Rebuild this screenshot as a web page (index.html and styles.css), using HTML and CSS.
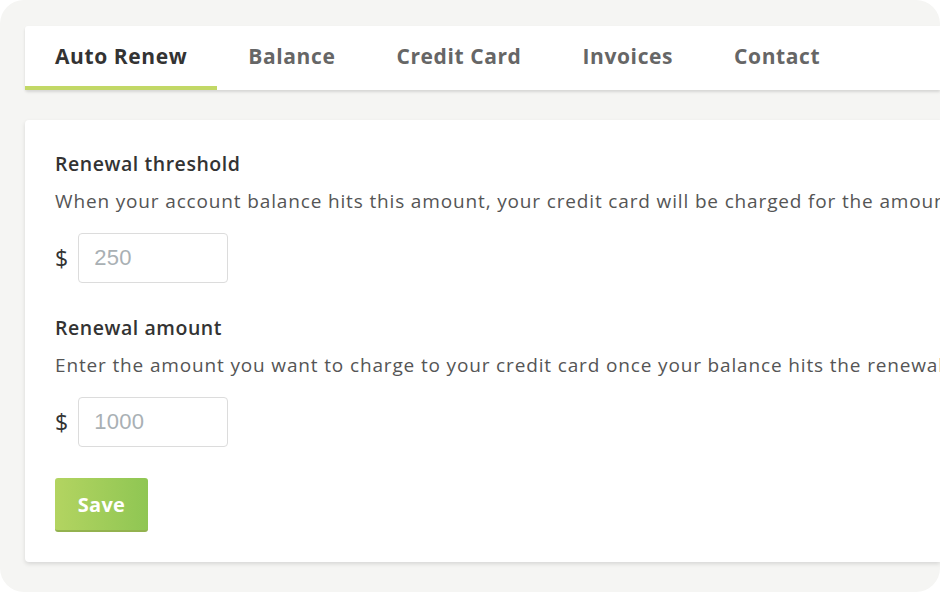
FILE: index.html
```html
<!DOCTYPE html>
<html lang="en">
<head>
    <meta charset="UTF-8">
    <meta name="viewport" content="width=device-width, initial-scale=1.0">
    <title>Auto Renew</title>
    <link rel="stylesheet" href="styles.css">
</head>
<body>
    <div class="frame">
        <!-- Tabs -->
        <nav class="tabs">
            <a class="tab active" href="#">Auto Renew</a>
            <a class="tab" href="#">Balance</a>
            <a class="tab" href="#">Credit Card</a>
            <a class="tab" href="#">Invoices</a>
            <a class="tab" href="#">Contact</a>
        </nav>

        <!-- Auto renew settings -->
        <section class="card">
            <div class="field">
                <h3>Renewal threshold</h3>
                <p>When your account balance hits this amount, your credit card will be charged for the amount set below.</p>
                <div class="input-row">
                    <span class="currency">$</span>
                    <input type="text" placeholder="250">
                </div>
            </div>
            <div class="field">
                <h3>Renewal amount</h3>
                <p>Enter the amount you want to charge to your credit card once your balance hits the renewal threshold.</p>
                <div class="input-row">
                    <span class="currency">$</span>
                    <input type="text" placeholder="1000">
                </div>
            </div>
            <button class="save">Save</button>
        </section>
    </div>
</body>
</html>
```

FILE: styles.css
```css
body {
    margin: 0;
    padding: 0;
    background-color: #fff;
    font-family: "Open Sans", Arial, sans-serif;
}

.frame {
    width: 940px;
    height: 592px;
    box-sizing: border-box;
    padding: 26px 0 0 25px;
    background-color: #f5f5f3;
    border-radius: 24px;
    overflow: hidden;
}

.tabs {
    display: flex;
    height: 64px;
    background-color: #fff;
    border-radius: 3px 0 0 3px;
    box-shadow: 0 2px 3px rgba(0, 0, 0, 0.13);
}

.tab {
    display: flex;
    align-items: center;
    padding: 0 30px;
    box-sizing: border-box;
    border-bottom: 4px solid transparent;
    font-size: 21px;
    font-weight: 700;
    color: #666;
    text-decoration: none;
    letter-spacing: 0.6px;
}

.tab + .tab {
    margin-left: 1px;
}

.tab.active {
    color: #333;
    border-bottom-color: #c2d866;
}

.card {
    margin-top: 30px;
    height: 442px;
    box-sizing: border-box;
    padding: 32px 0 0 30px;
    background-color: #fff;
    border-radius: 4px 0 0 4px;
    box-shadow: 0 2px 4px rgba(0, 0, 0, 0.12);
    overflow: hidden;
}

.field + .field {
    margin-top: 33px;
}

.field h3 {
    margin: 0;
    font-size: 19.5px;
    line-height: 24px;
    font-weight: 600;
    color: #333;
    letter-spacing: 0.55px;
}

.field p {
    margin: 13px 0 0;
    font-size: 19px;
    line-height: 24px;
    color: #555;
    white-space: nowrap;
    letter-spacing: 0.85px;
}

.input-row {
    display: flex;
    align-items: center;
    gap: 10px;
    margin-top: 20px;
}

.currency {
    font-size: 23px;
    color: #333;
}

.input-row input {
    width: 150px;
    height: 50px;
    box-sizing: border-box;
    padding: 0 15px;
    border: 1px solid #dcdcdc;
    border-radius: 4px;
    font-family: "Liberation Sans", Arial, sans-serif;
    font-size: 22px;
    letter-spacing: 0.3px;
    color: #333;
    outline: none;
}

.input-row input::placeholder {
    color: #a9b0b4;
}

.save {
    margin-top: 31px;
    width: 93px;
    height: 54px;
    border: none;
    border-bottom: 2px solid #93b24f;
    border-radius: 3px;
    background: linear-gradient(to right, #b3d461, #8fc653);
    color: #fff;
    font-family: "Open Sans", Arial, sans-serif;
    font-size: 20px;
    font-weight: 700;
    letter-spacing: 0.3px;
    cursor: pointer;
}
```
